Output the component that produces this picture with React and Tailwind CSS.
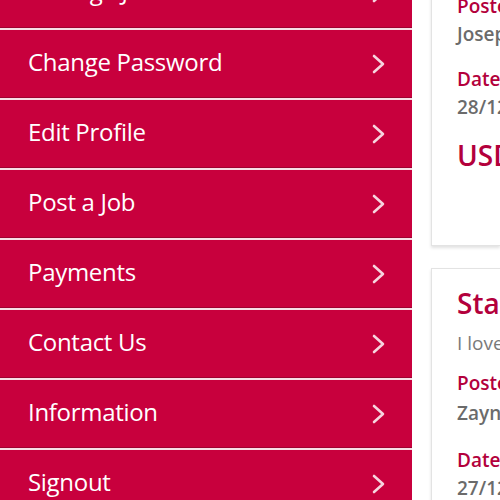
import React from "react";

const items = ["Manage Jobs", "Change Password", "Edit Profile", "Post a Job", "Payments", "Contact Us", "Information", "Signout"];

function Chevron() {
  return (
    <svg width="17" height="24" viewBox="0 0 17 24" fill="none" className="shrink-0 mt-[4px]">
      <path d="M4 4 L13 12 L4 20" stroke="#f6d5df" strokeWidth="2.6" strokeLinecap="round" strokeLinejoin="round" />
    </svg>
  );
}

function Label({ children }) {
  return <div className="text-[19px] leading-[28px] font-semibold text-[#b3003c] whitespace-nowrap">{children}</div>;
}
function Value({ children }) {
  return <div className="text-[19px] leading-[28px] font-semibold text-[#6b6b6b] whitespace-nowrap">{children}</div>;
}

export default function App() {
  return (
    <div className="w-[500px] h-[500px] overflow-hidden bg-white flex" style={{ fontFamily: '"Open Sans", "Liberation Sans", sans-serif' }}>
      <div className="w-[412px] shrink-0 flex flex-col -mt-[42px] bg-[#c8003d]">
        {items.map((t, i) => (
          <div key={t} className={`h-[70px] shrink-0 flex items-center justify-between pl-[28px] pr-[25px] pb-[5px] ${i > 0 ? "border-t-2 border-[#f7dde5] shadow-[0_-1px_0_#9e0030]" : ""}`}>
            <span className="text-[24px] text-white tracking-[-0.3px] whitespace-nowrap">{t}</span>
            <Chevron />
          </div>
        ))}
      </div>
      <div className="flex-1 flex flex-col pl-[19px] -mt-[23px] gap-[22px] min-w-0">
        <div className="shrink-0 border border-[#e3e3e3] border-r-0 shadow-[0_2px_3px_rgba(0,0,0,0.12)] pl-[25px] pt-[14px] pb-[72px] overflow-hidden">
          <Label>Posted by</Label>
          <Value>Joseph Smith</Value>
          <div className="mt-[17px]"><Label>Date</Label></div>
          <Value>28/12/2016</Value>
          <div className="mt-[16px] text-[28px] leading-[36px] font-semibold text-[#b3003c] whitespace-nowrap">USD 500</div>
        </div>
        <div className="shrink-0 border border-[#e3e3e3] border-r-0 shadow-[0_2px_3px_rgba(0,0,0,0.12)] pl-[25px] pt-[16px] pb-[40px] overflow-hidden">
          <div className="text-[28px] leading-[36px] font-semibold text-[#b3003c] whitespace-nowrap">Start a project</div>
          <div className="text-[19px] leading-[28px] text-[#7a7a7a] whitespace-nowrap mt-[8px]">I love this job</div>
          <div className="mt-[12px]"><Label>Posted by</Label></div>
          <div className="mt-[2px]"><Value>Zayn Malik</Value></div>
          <div className="mt-[19px]"><Label>Date</Label></div>
          <Value>27/12/2016</Value>
        </div>
      </div>
    </div>
  );
}
